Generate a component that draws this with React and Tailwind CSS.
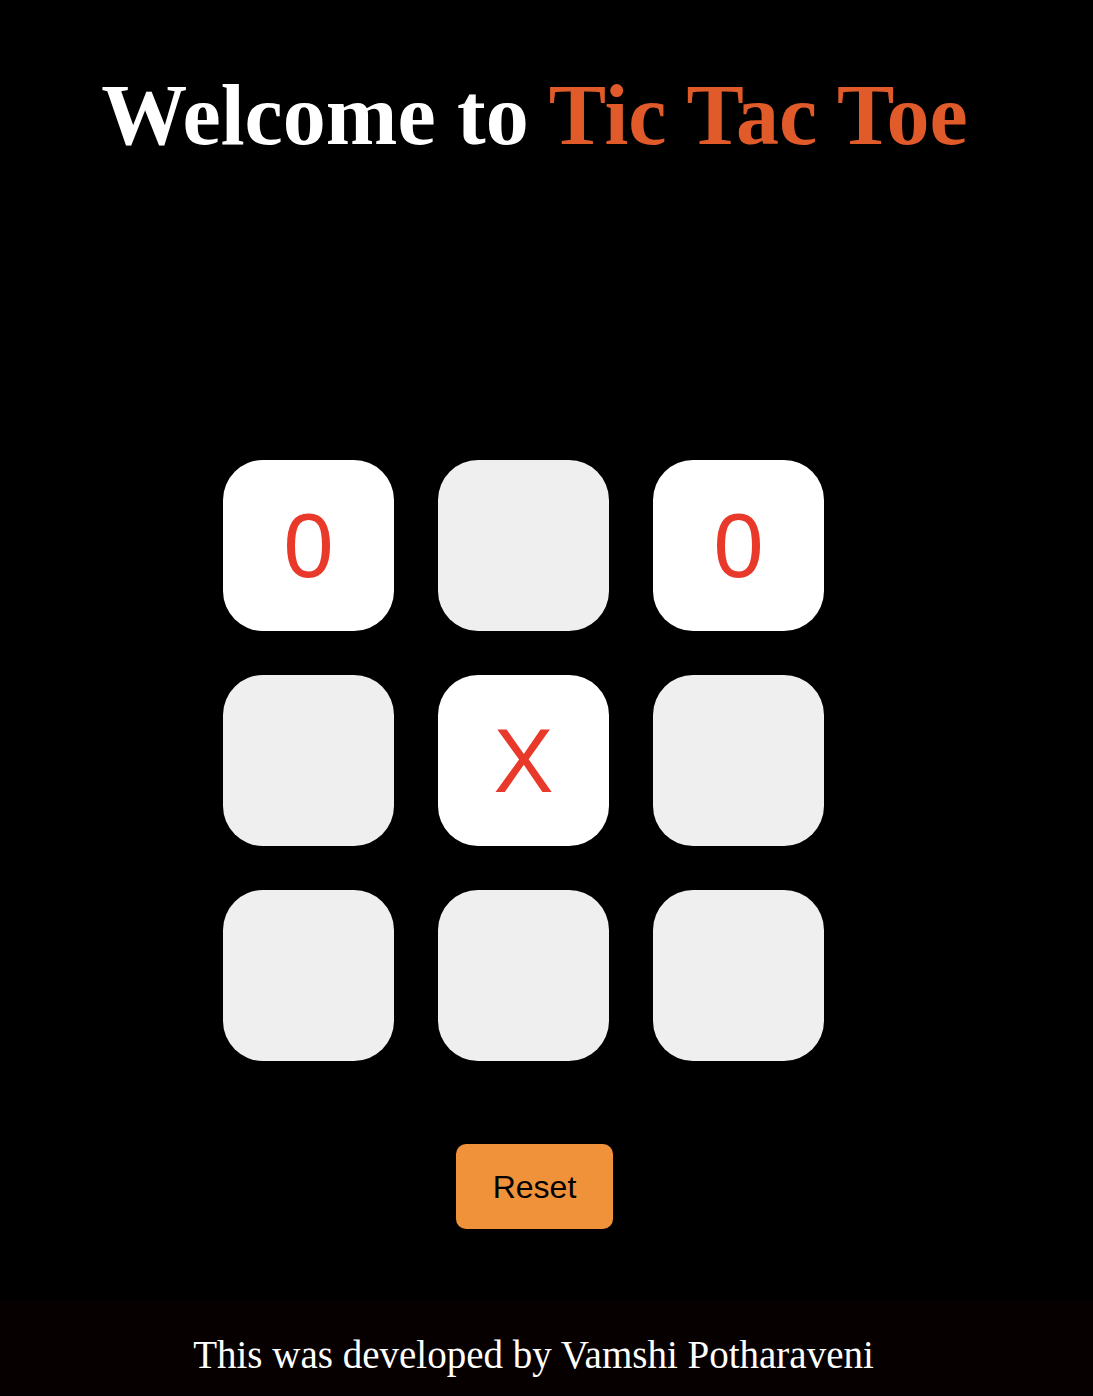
import React, { useState } from 'react';

const Cell = ({ value, onClick }) => {
  return (
    <button
      onClick={onClick}
      className={`w-[171px] h-[171px] rounded-[40px] flex items-center justify-center text-[90px] leading-none text-[#e8392a] font-['Liberation_Sans',Arial,sans-serif] ${
        value ? 'bg-white' : 'bg-[#efefef]'
      }`}
    >
      {value}
    </button>
  );
};

const App = () => {
  const [board, setBoard] = useState(['0', '', '0', '', 'X', '', '', '', '']);

  const reset = () => setBoard(Array(9).fill(''));

  return (
    <div className="min-h-screen bg-black flex flex-col font-['Liberation_Serif',serif]">
      <h1 className="pt-[72px] pr-[24px] text-center text-[86px] leading-none font-bold text-white">
        Welcome to <span className="text-[#e05a2a]">Tic Tac Toe</span>
      </h1>

      <div className="mt-[302px] mx-auto grid grid-cols-3 gap-[44px] pr-[46px]">
        {board.map((v, i) => (
          <Cell
            key={i}
            value={v}
            onClick={() => {
              if (board[i]) return;
              const next = [...board];
              next[i] = 'X';
              setBoard(next);
            }}
          />
        ))}
      </div>

      <div className="mt-[83px] flex justify-center pr-[24px]">
        <button
          onClick={reset}
          className="w-[157px] h-[85px] rounded-[10px] bg-[#f0923a] text-black text-[32px] font-['Liberation_Sans',Arial,sans-serif]"
        >
          Reset
        </button>
      </div>

      <footer className="mt-[72px] h-[94px] bg-[#060000] text-white text-center text-[39px] pt-[25px] pr-[26px]">
        This was developed by Vamshi Potharaveni
      </footer>
    </div>
  );
};

export default App;
